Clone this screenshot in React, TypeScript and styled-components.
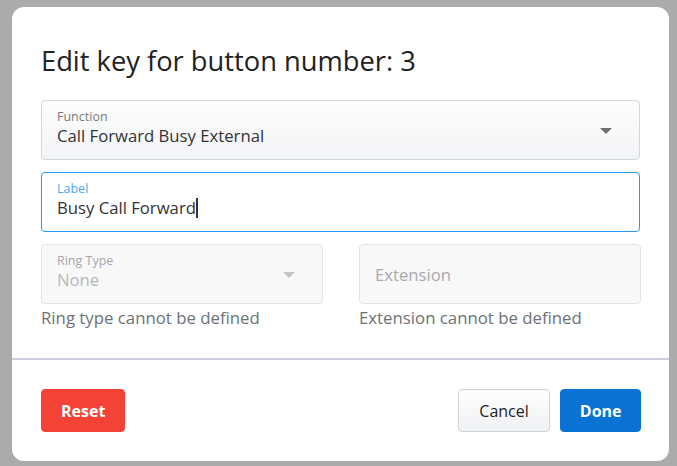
import React from "react";
import styled, { createGlobalStyle } from "styled-components";

const Global = createGlobalStyle`
  html, body { margin: 0; padding: 0; }
  body {
    background: #ababab;
    font-family: "Open Sans", "Noto Sans", sans-serif;
    width: 677px;
    height: 466px;
    overflow: hidden;
  }
`;

const Backdrop = styled.div`
  width: 677px;
  height: 466px;
  box-sizing: border-box;
  padding: 7px 8px 5px 12px;
`;

const Modal = styled.div`
  width: 657px;
  height: 454px;
  background: #fff;
  border-radius: 12px;
  box-sizing: border-box;
  display: flex;
  flex-direction: column;
`;

const Body = styled.div`
  padding: 36px 29px 0 29px;
  display: flex;
  flex-direction: column;
  gap: 12px;
  height: 351px;
  box-sizing: border-box;
`;

const Title = styled.h2`
  margin: 0 0 9px 0;
  font-size: 27.3px;
  font-weight: 400;
  color: #222;
  line-height: 36px;
`;

const Field = styled.div<{ $focused?: boolean; $disabled?: boolean }>`
  position: relative;
  height: 60px;
  box-sizing: border-box;
  border: 1px solid ${(p) => (p.$focused ? "#2b98f0" : p.$disabled ? "#e3e4e7" : "#d3d6da")};
  border-radius: 4px;
  background: ${(p) =>
    p.$focused ? "#fff" : p.$disabled ? "#f8f8f8" : "linear-gradient(#fdfdfd, #f3f4f6)"};
  padding: 7px 15px 0 15px;
  display: flex;
  flex-direction: column;
`;

const FieldLabel = styled.div<{ $focused?: boolean; $disabled?: boolean }>`
  font-size: 12.5px;
  line-height: 17px;
  color: ${(p) => (p.$focused ? "#4aa8f2" : p.$disabled ? "#a4a6aa" : "#777b80")};
`;

const FieldValue = styled.div<{ $disabled?: boolean }>`
  font-size: 16.7px;
  line-height: 22px;
  color: ${(p) => (p.$disabled ? "#b6b8bb" : "#333")};
  display: flex;
  align-items: center;
`;

const Placeholder = styled.div`
  font-size: 16.7px;
  line-height: 22px;
  color: #a7a9ac;
  margin-top: 12px;
`;

const Caret = styled.span`
  display: inline-block;
  width: 2px;
  height: 20px;
  background: #333;
`;

const Arrow = styled.span<{ $disabled?: boolean }>`
  position: absolute;
  right: 27px;
  top: 27px;
  width: 0;
  height: 0;
  border-left: 6px solid transparent;
  border-right: 6px solid transparent;
  border-top: 6px solid ${(p) => (p.$disabled ? "#c4c5c8" : "#6d6e71")};
`;

const Row = styled.div`
  display: grid;
  grid-template-columns: 282px 282px;
  column-gap: 36px;
`;

const Col = styled.div`
  display: flex;
  flex-direction: column;
`;

const Helper = styled.div`
  font-size: 16.8px;
  line-height: 22px;
  color: #6d7177;
  margin-top: 3px;
`;

const Divider = styled.div`
  height: 2px;
  background: #cdd0dc;
`;

const Footer = styled.div`
  display: flex;
  align-items: center;
  padding: 29px 28px 0 29px;
  gap: 10px;
`;

const Spacer = styled.div`
  flex: 1;
`;

const Button = styled.button<{ $variant: "danger" | "primary" | "default" }>`
  height: 43px;
  box-sizing: border-box;
  border-radius: 4px;
  font-family: "Open Sans", "Noto Sans", sans-serif;
  font-size: 16px;
  padding: 0 ${(p) => (p.$variant === "default" ? "20.5px" : p.$variant === "primary" ? "18.5px" : "19px")};
  cursor: pointer;
  font-weight: ${(p) => (p.$variant === "default" ? 400 : 700)};
  color: ${(p) => (p.$variant === "default" ? "#222" : "#fff")};
  border: 1px solid
    ${(p) => (p.$variant === "danger" ? "#f44336" : p.$variant === "primary" ? "#0a72d3" : "#cfd2d7")};
  background: ${(p) =>
    p.$variant === "danger"
      ? "#f44336"
      : p.$variant === "primary"
      ? "#0a72d3"
      : "linear-gradient(#fdfdfd, #f1f2f4)"};
`;

export default function App() {
  return (
    <>
      <Global />
      <Backdrop>
        <Modal>
          <Body>
            <Title>Edit key for button number: 3</Title>
            <Field>
              <FieldLabel>Function</FieldLabel>
              <FieldValue>Call Forward Busy External</FieldValue>
              <Arrow />
            </Field>
            <Field $focused>
              <FieldLabel $focused>Label</FieldLabel>
              <FieldValue>
                Busy Call Forward
                <Caret />
              </FieldValue>
            </Field>
            <Row>
              <Col>
                <Field $disabled>
                  <FieldLabel $disabled>Ring Type</FieldLabel>
                  <FieldValue $disabled>None</FieldValue>
                  <Arrow $disabled />
                </Field>
                <Helper>Ring type cannot be defined</Helper>
              </Col>
              <Col>
                <Field $disabled>
                  <Placeholder>Extension</Placeholder>
                </Field>
                <Helper>Extension cannot be defined</Helper>
              </Col>
            </Row>
          </Body>
          <Divider />
          <Footer>
            <Button $variant="danger">Reset</Button>
            <Spacer />
            <Button $variant="default">Cancel</Button>
            <Button $variant="primary">Done</Button>
          </Footer>
        </Modal>
      </Backdrop>
    </>
  );
}
